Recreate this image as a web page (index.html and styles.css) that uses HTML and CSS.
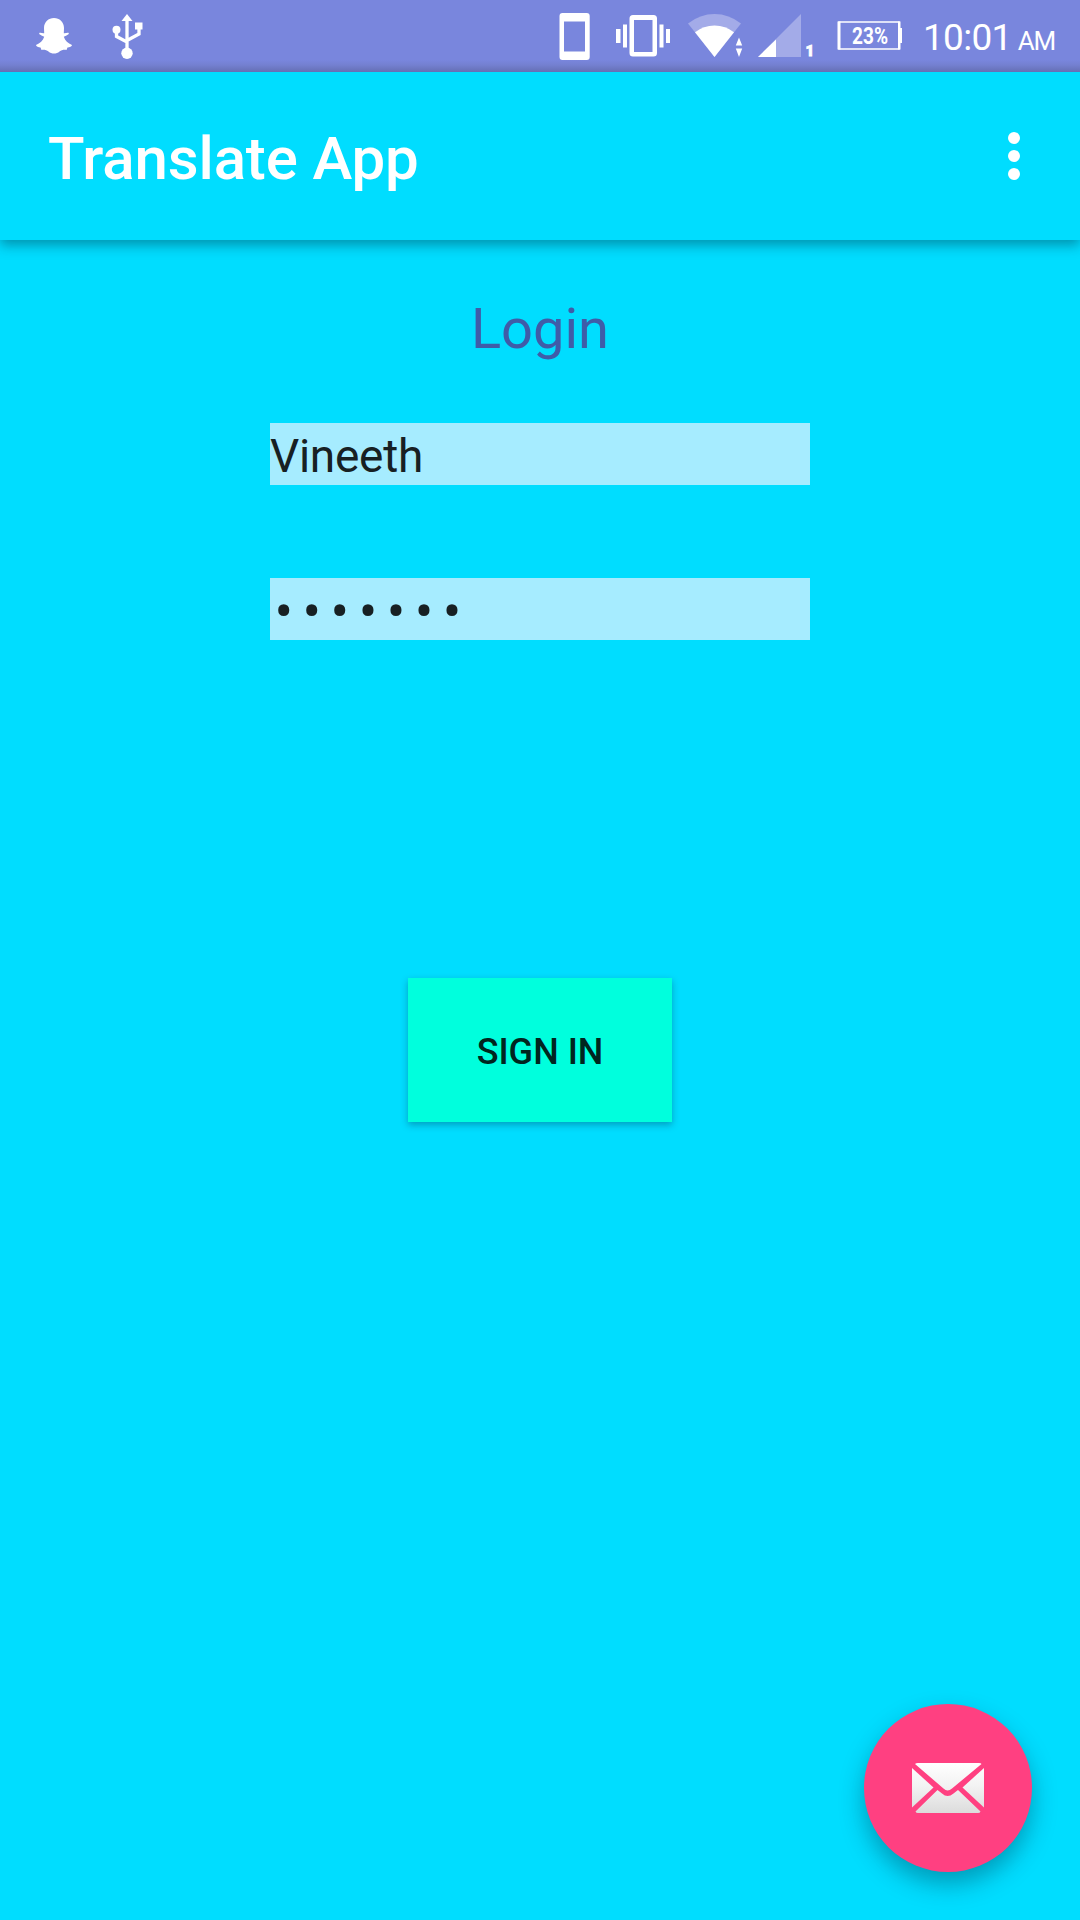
FILE: index.html
```html
<!DOCTYPE html>
<html lang="en">
<head>
<meta charset="utf-8">
<title>Translate App</title>
<link rel="stylesheet" href="styles.css">
</head>
<body>
<div class="screen">
  <div class="status-bar">
    <div class="status-group notifications">
      <svg class="status-icon" width="38" height="72" viewBox="35 0 38 72">
        <path d="M54 18C48.500 18 44 22 44 28L44.200 33.200C42.500 33.500 41 32.400 39.500 32.800C38.500 33.600 39.800 34.800 41.500 35.400L44.200 36.800C43 40.500 40 43.500 36 45C36 46.500 38.500 47.300 40.500 47.600L41.500 50C44 49.500 46.500 50 48.500 51.500C51.500 54.300 56.500 54.300 59.500 51.500C61.500 50 64 49.500 66.500 50L67.500 47.600C69.500 47.300 72 46.500 72 45C68 43.500 65 40.500 63.800 36.800L66.500 35.400C68.200 34.800 69.500 33.600 68.500 32.800C67 32.400 65.500 33.500 63.800 33.200L64 28C64 22 59.500 18 54 18Z"/>
      </svg>
      <svg class="status-icon" width="32" height="72" viewBox="112 0 32 72">
        <path d="M127 14L132.500 21H121.500Z"/>
        <rect x="135" y="22.500" width="7.500" height="7"/>
        <circle cx="116.500" cy="29.800" r="4"/>
        <circle cx="127" cy="53.200" r="5.700"/>
        <path class="outline" stroke-width="3.300" d="M127 18V51M116.500 31V36.500L127 42M139 28V34L127 40.500"/>
      </svg>
    </div>
    <div class="status-group system">
      <svg class="status-icon" width="32" height="72" viewBox="559 0 32 72">
        <path fill-rule="evenodd" d="M562.500 13H586.700Q589.700 13 589.700 16V57Q589.700 60 586.700 60H562.500Q559.500 60 559.500 57V16Q559.500 13 562.500 13ZM564 21.500V51.500H585V21.500Z"/>
      </svg>
      <svg class="status-icon" width="54" height="72" viewBox="616 0 54 72">
        <path fill-rule="evenodd" d="M633 15H653.500Q657 15 657 18.500V53Q657 56.500 653.500 56.500H633Q629.500 56.500 629.500 53V18.500Q629.500 15 633 15ZM634 20V52H652.500V20Z"/>
        <path d="M616 29H620.500V43H616ZM623 24.500H627V47.500H623ZM659.500 24.500H663.500V47.500H659.500ZM666 29H670V43H666Z"/>
      </svg>
      <svg class="status-icon" width="55" height="72" viewBox="688 0 55 72">
        <path class="dim" d="M688 23.500Q700 14 714.500 14Q729 14 741 23.500L714.500 57Z"/>
        <path d="M695 32.300Q703.500 25.500 714.500 25.500Q725.500 25.500 734 32.300L714.500 57Z"/>
        <path d="M739 37.500L742.200 45.500H735.800ZM739 57L735.800 48.500H742.200Z"/>
      </svg>
      <svg class="status-icon" width="56" height="72" viewBox="758 0 56 72">
        <path class="dim" d="M801 14V57H758Z"/>
        <path d="M776 39.500V57H758Z"/>
        <text class="sim" x="805.500" y="56" font-size="15" font-weight="900">1</text>
      </svg>
      <svg class="status-icon" width="66" height="72" viewBox="837 0 66 72">
        <path class="outline" stroke-width="1.600" d="M839 22H899V49H839Z"/>
        <path d="M837.500 21.500H840.500V49.500H837.500ZM898 21.500H900.500V49.500H898ZM899.500 28H902V43H899.500Z"/>
        <text x="852" y="44.200" font-size="23" font-weight="700" textLength="36" lengthAdjust="spacingAndGlyphs">23%</text>
      </svg>
      <div class="clock"><span>10:01</span><span class="meridiem">AM</span></div>
    </div>
  </div>

  <header class="app-bar">
    <h1 class="app-title">Translate App</h1>
    <button class="menu-button" aria-label="More options">
      <svg width="12" height="48" viewBox="0 0 12 48"><circle cx="6" cy="6" r="6"/><circle cx="6" cy="24" r="6"/><circle cx="6" cy="42" r="6"/></svg>
    </button>
  </header>

  <main class="login">
    <h2 class="login-title">Login</h2>
    <div class="field">Vineeth</div>
    <div class="field password">•••••••</div>
    <button class="sign-in">SIGN IN</button>
  </main>

  <button class="fab" aria-label="Mail">
    <svg width="72" height="50" viewBox="0 0 72 50">
      <defs>
        <linearGradient id="paper" gradientUnits="userSpaceOnUse" x1="0" y1="0" x2="0" y2="50">
          <stop offset="0" stop-color="#fff"/>
          <stop offset="0.450" stop-color="#f3f3f3"/>
          <stop offset="1" stop-color="#dcdcdc"/>
        </linearGradient>
      </defs>
      <g fill="url(#paper)">
        <path d="M3 1Q4 0 6 0H67Q69 0 69.500 1L40 25.500Q35.500 29.500 31.500 25.500Z"/>
        <path d="M0 5L21.500 24.500L0 44.500Z"/>
        <path d="M72 5L50.500 24.500L72 44.500Z"/>
        <path d="M3.500 48.500L25.500 27L30 30.500Q35.500 35.500 41.500 30.500L46 27L68.500 48.500Q68 50 66 50H6Q4 50 3.500 48.500Z"/>
      </g>
    </svg>
  </button>
</div>
</body>
</html>
```
FILE: styles.css
```css
* { box-sizing: border-box; }

body {
  margin: 0;
  font-family: Roboto, "Liberation Sans", sans-serif;
}

button {
  border: 0;
  padding: 0;
  font-family: inherit;
}

.screen {
  position: relative;
  display: flex;
  flex-direction: column;
  width: 1080px;
  height: 1920px;
  overflow: hidden;
  background: #00ddff;
}

.status-bar {
  display: flex;
  justify-content: space-between;
  height: 72px;
  padding: 0 24px 0 35px;
  color: #fff;
  background: linear-gradient(#7986dd 0 60px, #7480d0 65px, #656fb4 72px);
}

.status-group { display: flex; }
.notifications { gap: 39px; }
.system { gap: 23px; }

.status-icon {
  display: block;
  flex: none;
  fill: #fff;
}

.system .status-icon:nth-child(1) { margin-right: 2px; }
.system .status-icon:nth-child(2) { margin-right: -5px; }
.system .status-icon:nth-child(3) { margin-right: -8px; }
.outline { fill: none; stroke: #fff; }
.dim { fill: #a3abe8; }
.sim { stroke: #fff; stroke-width: 0.8px; }

.clock {
  display: flex;
  align-items: baseline;
  gap: 6px;
  width: 134px;
  margin-left: -4px;
  padding-left: 1px;
  font-size: 37px;
  line-height: 76px;
  letter-spacing: -0.7px;
  white-space: nowrap;
}

.meridiem { font-size: 26px; letter-spacing: -1px; }

.app-bar {
  position: relative;
  display: flex;
  align-items: flex-start;
  justify-content: space-between;
  height: 168px;
  padding: 0 60px 0 48px;
  background: #00ddff;
  box-shadow: 0 5px 12px rgba(0, 40, 60, 0.42);
  clip-path: inset(0 0 -30px 0);
}

.app-title {
  margin: 0;
  padding-top: 51px;
  color: #fff;
  font-size: 60px;
  font-weight: 500;
  line-height: 72px;
  letter-spacing: -0.15px;
}

.menu-button {
  height: 48px;
  margin-top: 60px;
  background: none;
}

.menu-button svg { display: block; fill: #fff; }

.login {
  display: flex;
  flex-direction: column;
  align-items: center;
}

.login-title {
  margin: 0;
  padding-top: 55px;
  color: #3f5ca8;
  font-size: 56px;
  font-weight: 400;
  line-height: 68px;
}

.field {
  width: 540px;
  height: 62px;
  margin-top: 60px;
  color: #172023;
  background: #a6ecff;
  font-size: 46px;
  line-height: 66px;
  letter-spacing: -0.3px;
}

.password {
  margin-top: 93px;
  padding-left: 4.5px;
  font-size: 55px;
  line-height: 68px;
  letter-spacing: 9.5px;
}

.sign-in {
  width: 264px;
  height: 144px;
  margin-top: 338px;
  padding-top: 3px;
  color: #00261f;
  background: #00ffdd;
  box-shadow: 0 3px 7px rgba(0, 50, 80, 0.36);
  font-size: 36px;
  font-weight: 500;
}

.fab {
  position: absolute;
  right: 48px;
  bottom: 48px;
  display: flex;
  align-items: center;
  justify-content: center;
  width: 168px;
  height: 168px;
  border-radius: 50%;
  background: #ff4081;
  box-shadow: 0 12px 24px rgba(0, 50, 70, 0.38);
}
```
